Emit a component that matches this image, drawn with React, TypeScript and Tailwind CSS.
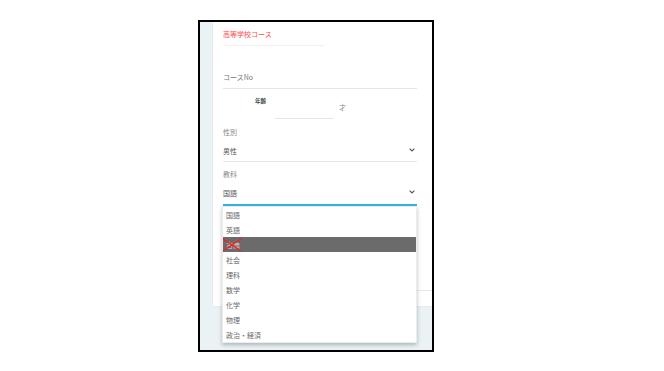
import React from 'react';

const subjects = ['国語', '英語', '古典', '社会', '理科', '数学', '化学', '物理', '政治・経済'];

function Chevron() {
  return (
    <svg width="6" height="4" viewBox="0 0 6 4" className="mr-[2px] mt-[-3px]">
      <path d="M0.6 0.6 L3 3 L5.4 0.6" fill="none" stroke="#555" strokeWidth="1.1" />
    </svg>
  );
}

export default function App() {
  return (
    <div
      className="w-[664px] h-[371px] bg-white pt-[20px] pl-[198px]"
      style={{ fontFamily: '"Noto Sans CJK JP", "Noto Sans", sans-serif' }}
    >
      <div className="w-[236px] h-[332px] border-2 border-black bg-[#eaf2f6] flex">
        <div className="w-[13px] shrink-0" />
        <div className="flex-1 h-[284px] bg-white pl-[10px] pr-[15px] shadow-[0_0_2px_rgba(0,0,0,0.08)]">
          {/* title */}
          <div className="h-[24px] w-[102px] pt-[7px] border-b border-[#f2f2f2] text-[7px] leading-[10px] text-[#ff4747]">
            高等学校コース
          </div>

          {/* course no */}
          <div className="h-[43px] flex items-end pb-[6px] border-b border-[#e6e6e6] text-[7px] leading-[10px] text-[#777]">
            コースNo
          </div>

          {/* age */}
          <div className="h-[30px] flex items-start">
            <span className="ml-[32px] mt-[9px] text-[5.5px] leading-[6px] font-bold text-[#444]">年齢</span>
            <div className="ml-[9px] w-[59px] h-[30px] border-b border-[#e6e6e6]" />
            <span className="ml-[5px] mt-[13px] text-[7px] leading-[10px] text-[#888]">才</span>
          </div>

          {/* gender */}
          <div className="pt-[8px] pb-[5px] border-b border-[#e6e6e6]">
            <div className="text-[7px] leading-[10px] text-[#888]">性別</div>
            <div className="mt-[9px] h-[10px] flex items-center justify-between">
              <span className="text-[7px] leading-[10px] text-[#555]">男性</span>
              <Chevron />
            </div>
          </div>

          {/* subject */}
          <div className="relative">
            <div className="pt-[7px] pb-[6px] border-b-2 border-[#33b6d8]">
              <div className="text-[7px] leading-[10px] text-[#888]">教科</div>
              <div className="mt-[9px] h-[10px] flex items-center justify-between">
                <span className="text-[7px] leading-[10px] text-[#555]">国語</span>
                <Chevron />
              </div>
            </div>

            <div className="absolute left-[-1px] right-0 top-full z-10 bg-white border border-[#ececec] shadow-[0_2px_4px_rgba(0,0,0,0.25)]">
              {subjects.map((s, i) => (
                <div
                  key={s}
                  className={`relative h-[15px] pl-[3px] flex items-center text-[7px] leading-[10px] ${
                    i === 2 ? 'bg-[#6b6b6b] text-[#d4d4d4]' : 'text-[#666]'
                  }`}
                >
                  {s}
                  {i === 2 && (
                    <svg width="20" height="14" viewBox="0 0 20 14" className="absolute left-[-1px] top-[0.5px]">
                      <path d="M1 1 L19 13 M1 13 L19 1" stroke="#ff1a1a" strokeWidth="1.4" />
                    </svg>
                  )}
                </div>
              ))}
            </div>
          </div>

          <div className="h-[85px] -mr-[15px] border-b border-[#e8e8e8]" />
        </div>
      </div>
    </div>
  );
}
